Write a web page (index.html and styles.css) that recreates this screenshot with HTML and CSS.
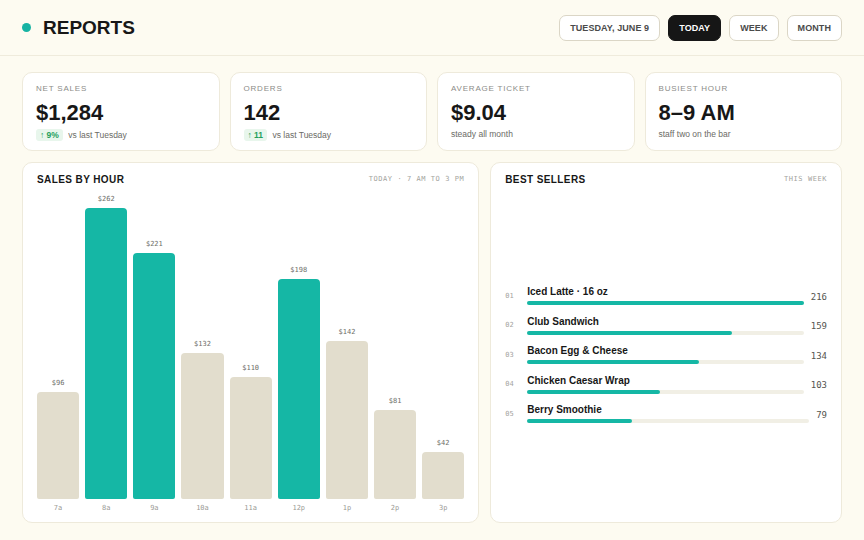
FILE: index.html
```html
<!DOCTYPE html>
<html lang="en">
<head>
    <meta charset="UTF-8">
    <meta name="viewport" content="width=device-width, initial-scale=1.0">
    <title>Reports</title>
    <link rel="stylesheet" href="styles.css">
</head>
<body>
    <header class="topbar">
        <div class="brand">
            <span class="dot"></span>
            <h1>REPORTS</h1>
        </div>
        <nav class="filters">
            <button class="pill">TUESDAY, JUNE 9</button>
            <button class="pill active">TODAY</button>
            <button class="pill">WEEK</button>
            <button class="pill">MONTH</button>
        </nav>
    </header>

    <main class="page">
        <section class="kpis">
            <div class="card kpi">
                <div class="label">NET SALES</div>
                <div class="value">$1,284</div>
                <div class="sub"><span class="badge">&uarr; 9%</span> vs last Tuesday</div>
            </div>
            <div class="card kpi">
                <div class="label">ORDERS</div>
                <div class="value">142</div>
                <div class="sub"><span class="badge">&uarr; 11</span> vs last Tuesday</div>
            </div>
            <div class="card kpi">
                <div class="label">AVERAGE TICKET</div>
                <div class="value">$9.04</div>
                <div class="sub">steady all month</div>
            </div>
            <div class="card kpi">
                <div class="label">BUSIEST HOUR</div>
                <div class="value">8&ndash;9 AM</div>
                <div class="sub">staff two on the bar</div>
            </div>
        </section>

        <section class="panels">
            <div class="card panel">
                <div class="panel-head">
                    <h2>SALES BY HOUR</h2>
                    <span class="meta">TODAY · 7 AM TO 3 PM</span>
                </div>
                <div class="chart">
                    <div class="col"><span class="amt">$96</span><div class="bar" style="height:107px"></div><span class="hour">7a</span></div>
                    <div class="col"><span class="amt">$262</span><div class="bar peak" style="height:291px"></div><span class="hour">8a</span></div>
                    <div class="col"><span class="amt">$221</span><div class="bar peak" style="height:246px"></div><span class="hour">9a</span></div>
                    <div class="col"><span class="amt">$132</span><div class="bar" style="height:146px"></div><span class="hour">10a</span></div>
                    <div class="col"><span class="amt">$110</span><div class="bar" style="height:122px"></div><span class="hour">11a</span></div>
                    <div class="col"><span class="amt">$198</span><div class="bar peak" style="height:220px"></div><span class="hour">12p</span></div>
                    <div class="col"><span class="amt">$142</span><div class="bar" style="height:158px"></div><span class="hour">1p</span></div>
                    <div class="col"><span class="amt">$81</span><div class="bar" style="height:89px"></div><span class="hour">2p</span></div>
                    <div class="col"><span class="amt">$42</span><div class="bar" style="height:47px"></div><span class="hour">3p</span></div>
                </div>
            </div>

            <div class="card panel">
                <div class="panel-head">
                    <h2>BEST SELLERS</h2>
                    <span class="meta">THIS WEEK</span>
                </div>
                <ul class="sellers">
                    <li>
                        <span class="rank">01</span>
                        <div class="item">
                            <div class="name">Iced Latte · 16 oz</div>
                            <div class="track"><div class="fill" style="width:100%"></div></div>
                        </div>
                        <span class="count">216</span>
                    </li>
                    <li>
                        <span class="rank">02</span>
                        <div class="item">
                            <div class="name">Club Sandwich</div>
                            <div class="track"><div class="fill" style="width:74%"></div></div>
                        </div>
                        <span class="count">159</span>
                    </li>
                    <li>
                        <span class="rank">03</span>
                        <div class="item">
                            <div class="name">Bacon Egg &amp; Cheese</div>
                            <div class="track"><div class="fill" style="width:62%"></div></div>
                        </div>
                        <span class="count">134</span>
                    </li>
                    <li>
                        <span class="rank">04</span>
                        <div class="item">
                            <div class="name">Chicken Caesar Wrap</div>
                            <div class="track"><div class="fill" style="width:48%"></div></div>
                        </div>
                        <span class="count">103</span>
                    </li>
                    <li>
                        <span class="rank">05</span>
                        <div class="item">
                            <div class="name">Berry Smoothie</div>
                            <div class="track"><div class="fill" style="width:37%"></div></div>
                        </div>
                        <span class="count">79</span>
                    </li>
                </ul>
            </div>
        </section>
    </main>
</body>
</html>
```

FILE: styles.css
```css
* {
    box-sizing: border-box;
}
body {
    margin: 0;
    font-family: 'Liberation Sans', Arial, sans-serif;
    background-color: #fdfbf1;
    color: #171717;
    width: 864px;
    height: 540px;
    overflow: hidden;
}
.topbar {
    height: 56px;
    padding: 0 22px;
    display: flex;
    align-items: center;
    justify-content: space-between;
    border-bottom: 1px solid #efebdc;
}
.brand {
    display: flex;
    align-items: center;
    gap: 12px;
}
.dot {
    width: 9px;
    height: 9px;
    border-radius: 50%;
    background: #17b3a3;
}
.brand h1 {
    margin: 0;
    font-size: 19px;
    font-weight: 700;
}
.filters {
    display: flex;
    gap: 8px;
}
.pill {
    height: 26px;
    padding: 0 10px;
    border: 1px solid #dbd6c6;
    border-radius: 7px;
    background: #fff;
    color: #4a4a4a;
    font-family: 'Liberation Sans', Arial, sans-serif;
    font-size: 9px;
    font-weight: 700;
    letter-spacing: 0.01em;
}
.pill.active {
    background: #161616;
    border-color: #161616;
    color: #fff;
}
.page {
    padding: 16px 22px 17px;
    display: flex;
    flex-direction: column;
    gap: 11px;
    height: 484px;
}
.card {
    background: #fff;
    border: 1px solid #eeeadb;
    border-radius: 10px;
}
.kpis {
    display: grid;
    grid-template-columns: repeat(4, 1fr);
    gap: 10px;
}
.kpi {
    height: 79px;
    padding: 11px 13px 0;
}
.label {
    font-size: 8px;
    letter-spacing: 0.1em;
    color: #8c8c88;
}
.value {
    margin-top: 7px;
    font-size: 22px;
    font-weight: 700;
    line-height: 26px;
}
.sub {
    margin-top: 3px;
    font-size: 8.5px;
    color: #6b6b66;
}
.badge {
    display: inline-block;
    padding: 1px 4px;
    margin-right: 3px;
    border-radius: 3px;
    background: #e8f6ec;
    color: #25a05c;
    font-weight: 700;
}
.panels {
    flex: 1;
    display: grid;
    grid-template-columns: 1.3fr 1fr;
    gap: 11px;
}
.panel {
    display: flex;
    flex-direction: column;
    padding: 9px 14px 9px;
}
.panel-head {
    display: flex;
    justify-content: space-between;
    align-items: center;
    height: 14px;
}
.panel-head h2 {
    margin: 0;
    font-size: 10px;
    font-weight: 700;
    letter-spacing: 0.04em;
}
.meta {
    font-family: 'DejaVu Sans Mono', monospace;
    font-size: 7px;
    letter-spacing: 0.08em;
    color: #a3a39e;
}
.chart {
    flex: 1;
    display: flex;
    gap: 6px;
    align-items: flex-end;
}
.col {
    flex: 1;
    display: flex;
    flex-direction: column;
    align-items: center;
}
.amt {
    font-family: 'DejaVu Sans Mono', monospace;
    font-size: 7px;
    color: #6e6e69;
    line-height: 9px;
    margin-bottom: 4px;
}
.bar {
    width: 100%;
    border-radius: 4px 4px 2px 2px;
    background: #e2ddcd;
}
.bar.peak {
    background: #15b7a5;
}
.hour {
    font-family: 'DejaVu Sans Mono', monospace;
    font-size: 7px;
    color: #9b9b96;
    line-height: 10px;
    margin-top: 4px;
}
.sellers {
    flex: 1;
    list-style: none;
    margin: 0;
    padding: 10px 0 0;
    display: flex;
    flex-direction: column;
    justify-content: center;
    gap: 10.5px;
}
.sellers li {
    display: flex;
    align-items: center;
    gap: 7px;
}
.rank {
    width: 15px;
    font-family: 'DejaVu Sans Mono', monospace;
    font-size: 7px;
    color: #a3a39e;
}
.item {
    flex: 1;
}
.name {
    font-size: 10px;
    font-weight: 700;
    line-height: 12px;
    margin-bottom: 3px;
}
.track {
    height: 4px;
    border-radius: 2px;
    background: #f1efe5;
}
.fill {
    height: 4px;
    border-radius: 2px;
    background: #15b7a5;
}
.count {
    font-family: 'DejaVu Sans Mono', monospace;
    font-size: 9px;
    color: #55554f;
    padding-top: 2px;
}
```
